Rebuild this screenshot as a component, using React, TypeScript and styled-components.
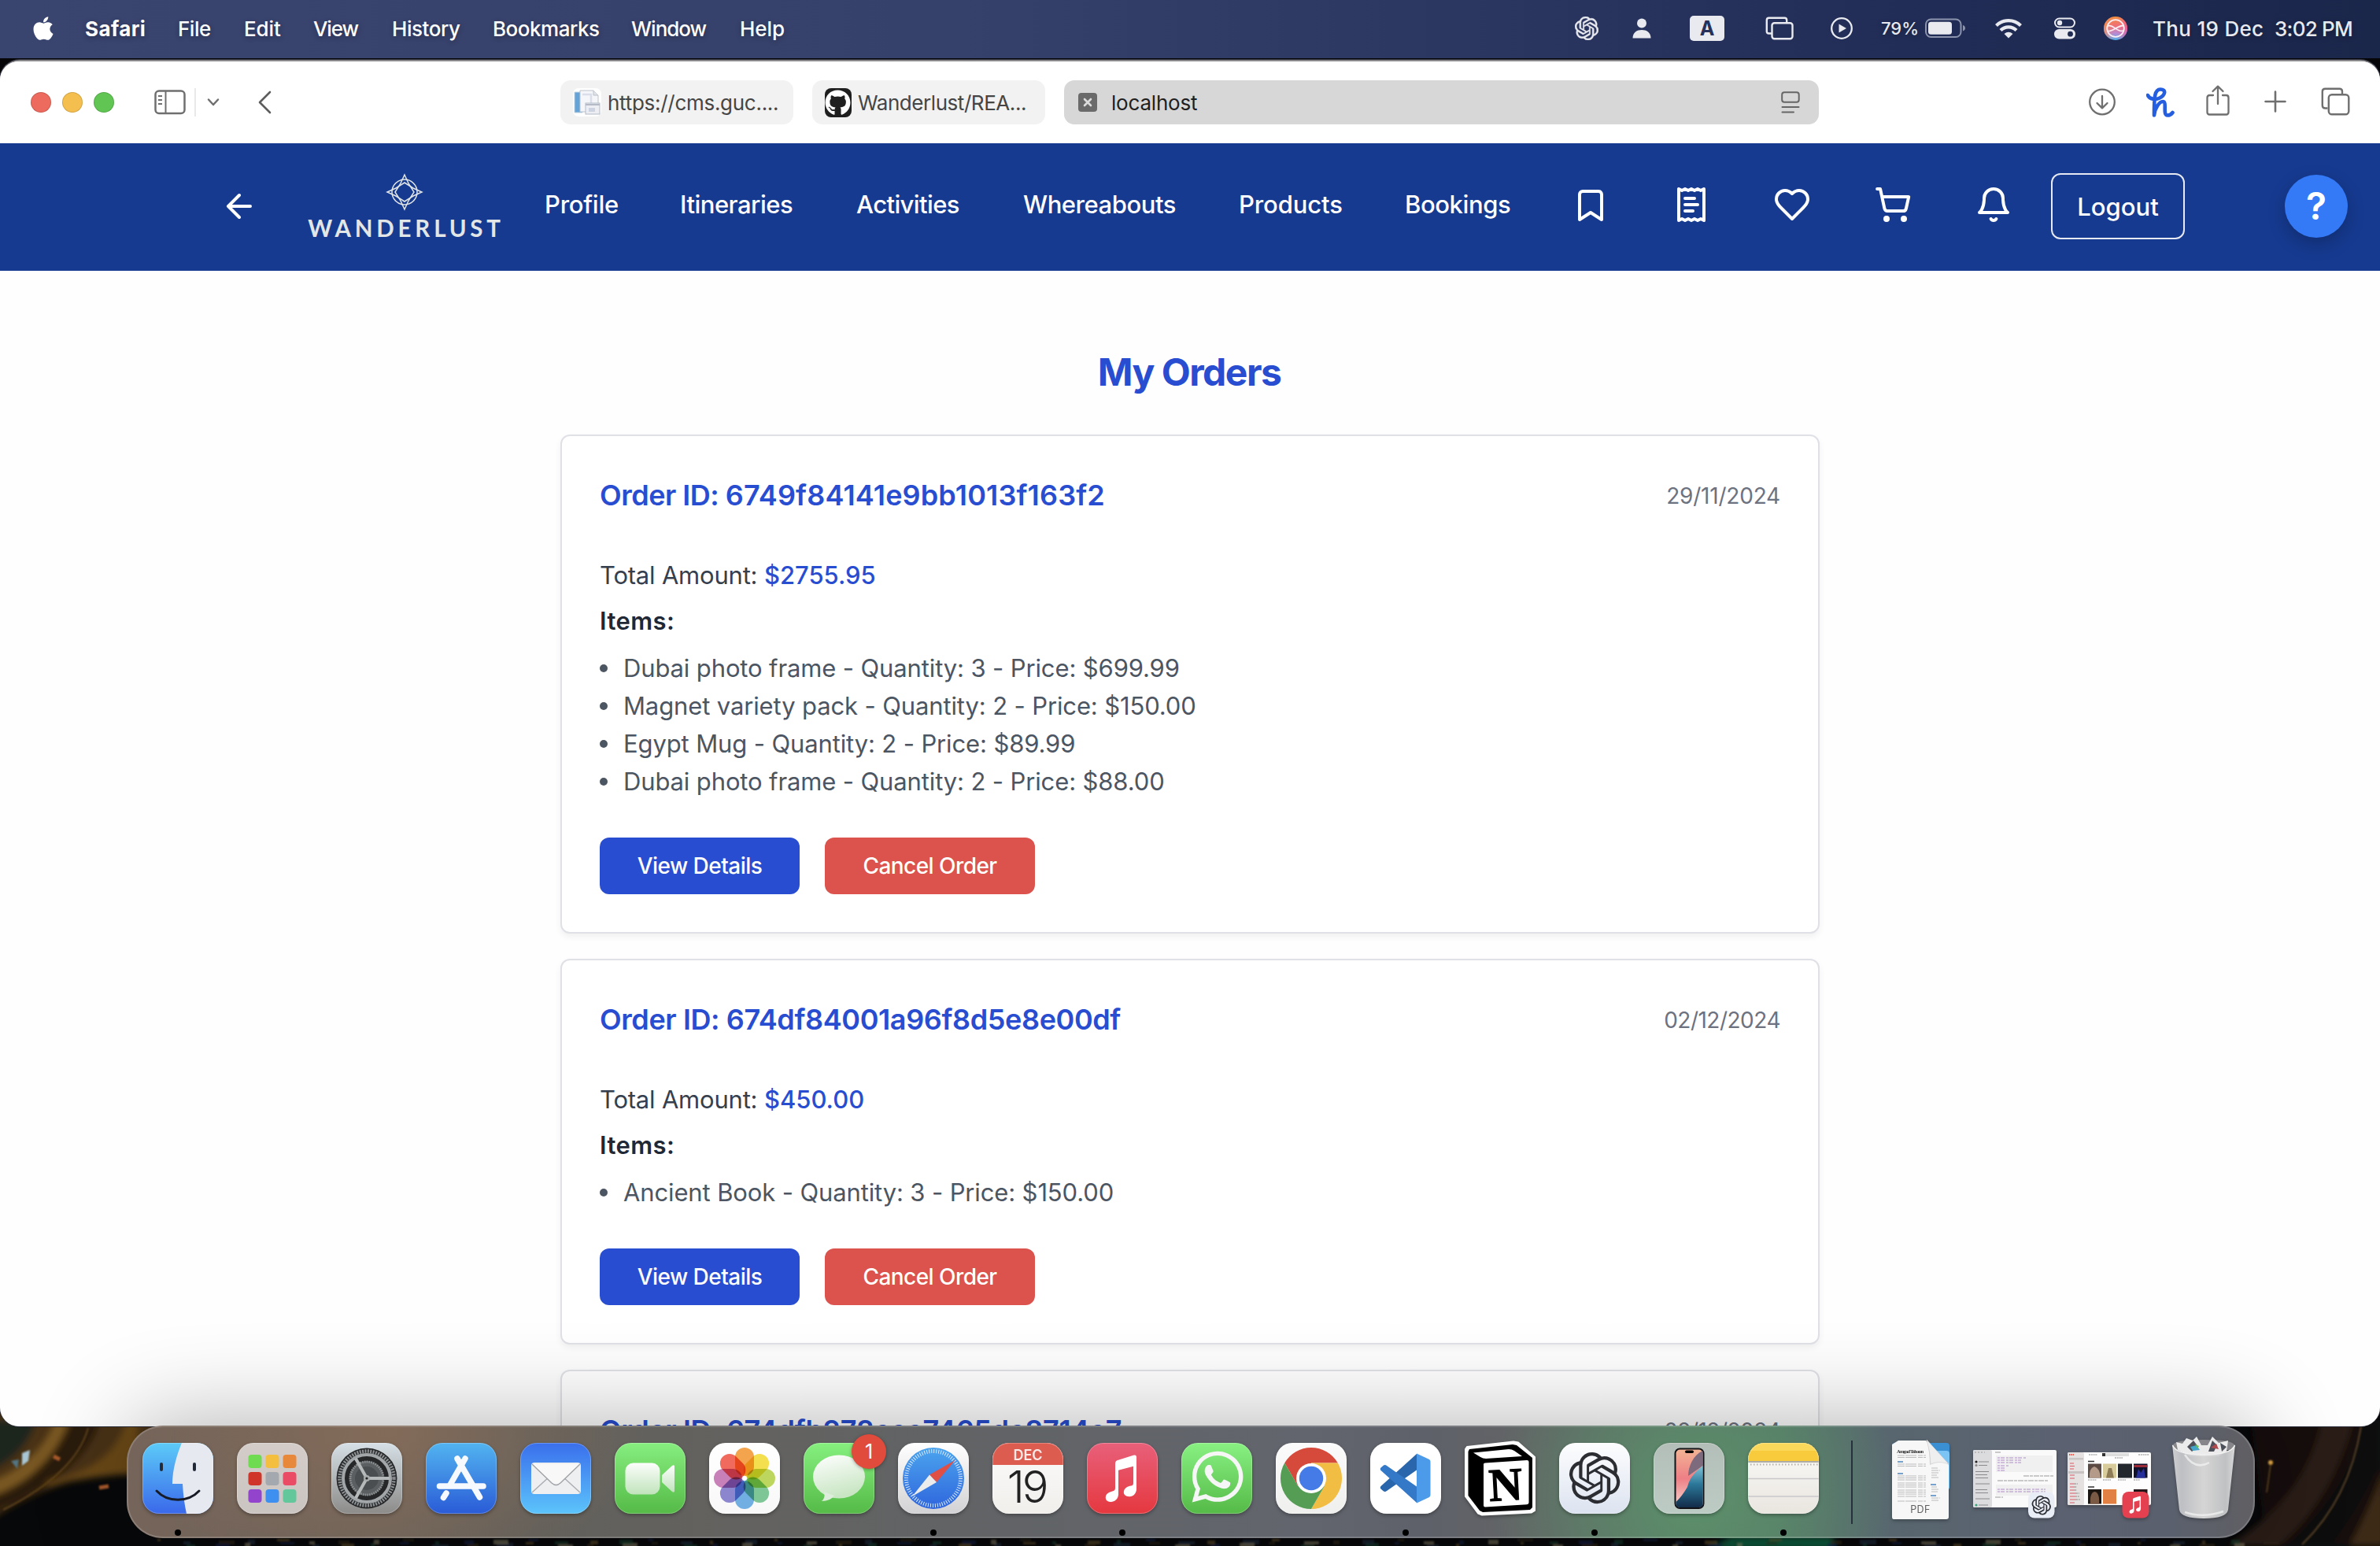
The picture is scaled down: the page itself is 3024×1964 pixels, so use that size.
import React from "react";
import styled, { createGlobalStyle } from "styled-components";
import { FaApple, FaGithub, FaWhatsapp } from "react-icons/fa";

const GlobalStyle = createGlobalStyle`
  * { box-sizing: border-box; }
  html, body { margin: 0; padding: 0; background: #000; }
  body { font-family: Inter, "Liberation Sans", sans-serif; overflow: hidden; }
  h1, h2, h3, p, ul { margin: 0; padding: 0; font-weight: inherit; }
  svg { display: block; flex: none; }
  button { font-family: inherit; border: 0; padding: 0; }
`;

/* ---------- shared ---------- */

const Label = styled.span<{ $track?: number }>`
  letter-spacing: ${(p) => p.$track ?? 0}px;
  white-space: nowrap;
`;

const OPENAI =
  "M22.2819 9.8211a5.9847 5.9847 0 0 0-.5157-4.9108 6.0462 6.0462 0 0 0-6.5098-2.9A6.0651 6.0651 0 0 0 4.9807 4.1818a5.9847 5.9847 0 0 0-3.9977 2.9 6.0462 6.0462 0 0 0 .7427 7.0966 5.98 5.98 0 0 0 .511 4.9107 6.051 6.051 0 0 0 6.5146 2.9001A5.9847 5.9847 0 0 0 13.2599 24a6.0557 6.0557 0 0 0 5.7718-4.2058 5.9894 5.9894 0 0 0 3.9977-2.9001 6.0557 6.0557 0 0 0-.7475-7.0729zm-9.022 12.6081a4.4755 4.4755 0 0 1-2.8764-1.0408l.1419-.0804 4.7783-2.7582a.7948.7948 0 0 0 .3927-.6813v-6.7369l2.02 1.1686a.071.071 0 0 1 .038.0615v5.5826a4.504 4.504 0 0 1-4.4945 4.4944zm-9.6607-4.1254a4.4708 4.4708 0 0 1-.5346-3.0137l.142.0852 4.783 2.7582a.7712.7712 0 0 0 .7806 0l5.8428-3.3685v2.3324a.0804.0804 0 0 1-.0332.0615L9.74 19.9502a4.4992 4.4992 0 0 1-6.1408-1.6464zM2.3408 7.8956a4.485 4.485 0 0 1 2.3655-1.9728V11.6a.7664.7664 0 0 0 .3879.6765l5.8144 3.3543-2.0201 1.1685a.0757.0757 0 0 1-.071 0l-4.8303-2.7865A4.504 4.504 0 0 1 2.3408 7.872zm16.5963 3.8558L13.1038 8.364 15.1192 7.2a.0757.0757 0 0 1 .071 0l4.8303 2.7913a4.4944 4.4944 0 0 1-.6765 8.1042v-5.6772a.79.79 0 0 0-.407-.667zm2.0107-3.0231l-.142-.0852-4.7735-2.7818a.7759.7759 0 0 0-.7854 0L9.409 9.2297V6.8974a.0662.0662 0 0 1 .0284-.0615l4.8303-2.7866a4.4992 4.4992 0 0 1 6.6802 4.66zM8.3065 12.863l-2.02-1.1638a.0804.0804 0 0 1-.038-.0567V6.0742a4.4992 4.4992 0 0 1 7.3757-3.4537l-.142.0805L8.704 5.459a.7948.7948 0 0 0-.3927.6813zm1.0976-2.3654l2.602-1.4998 2.6069 1.4998v2.9994l-2.5974 1.4997-2.6067-1.4997Z";

const NOTE =
  "M38 26 Q38 22.5 42 21.6 L61 15.6 Q65 14.6 65 18 V58 C65 64 61 68 56 68 C51 68 48 65 49 61 C50 57 54 55 58 54.4 Q61 54 61 51 V29.5 L42 34.5 V65 C42 71 37 75 32 74.8 C27 74.6 25 71 26 67.5 C27 63.5 31 62 35 61 Q38 60.4 38 57 Z";

/* ---------- desktop ---------- */

const Desktop = styled.div`
  position: relative;
  width: 3024px;
  height: 1964px;
  overflow: hidden;
  display: flex;
  flex-direction: column;
  background: #060608;
`;

const Wallpaper = styled.svg`
  position: absolute;
  left: 0;
  bottom: 0;
`;

const MenuBar = styled.header`
  position: relative;
  height: 74px;
  flex: none;
  display: flex;
  align-items: center;
  padding: 0 36px 2px 38px;
  background: linear-gradient(90deg, #39446f 0%, #36416b 40%, #2a3660 63%, #202c55 82%, #1b264b 100%);
  color: #fff;
  font-size: 26px;
  font-weight: 500;
  text-shadow: 0 2px 6px rgba(0, 0, 0, 0.3);
`;

const MenuTitles = styled.nav`
  display: grid;
  grid-template-columns: 70px 118px 84px 88px 100px 128px 176px 138px 60px;
  align-items: center;
  margin-right: auto;
`;

const MenuTitle = styled(Label)<{ $bold?: boolean }>`
  font-weight: ${(p) => (p.$bold ? 700 : 500)};
`;

const StatusItems = styled.div`
  display: flex;
  align-items: center;
  color: #e9eaef;
`;

const StatusItem = styled.span<{ $gap: number; $w: number; $size?: number }>`
  display: flex;
  align-items: center;
  width: ${(p) => p.$w}px;
  margin-left: ${(p) => p.$gap}px;
  font-size: ${(p) => p.$size ?? 26}px;
`;

const InputSource = styled.b`
  width: 44px;
  height: 32px;
  border-radius: 5px;
  background: #e9eaef;
  color: #26315b;
  font-size: 25px;
  font-weight: 700;
  line-height: 32px;
  text-align: center;
  text-shadow: none;
`;

/* ---------- browser window ---------- */

const Window = styled.section`
  position: relative;
  flex: none;
  height: 1734px;
  margin-top: 4px;
  border-radius: 24px;
  overflow: hidden;
  background: #fefefe;
  display: flex;
  flex-direction: column;
`;

const WindowEdge = styled.div`
  position: absolute;
  inset: 76px 0 152px;
  border-radius: 25px;
  background: #8a8a8c;
  box-shadow: 0 0 0 1px #2c2e3c;
`;

const Toolbar = styled.div`
  height: 104px;
  flex: none;
  display: grid;
  grid-template-columns: 712px 1599px 1fr;
  align-items: center;
  color: #6f6f6f;
  background: #fff;
`;

const ToolbarLeft = styled.div`
  display: flex;
  align-items: center;
  padding-left: 39px;
`;

const ToolIcon = styled.span<{ $ml?: number; $up?: number }>`
  display: block;
  margin-left: ${(p) => p.$ml ?? 0}px;
  margin-bottom: ${(p) => p.$up ?? 0}px;
`;

const Light = styled.i<{ $c: string }>`
  width: 26px;
  height: 26px;
  margin-right: 14px;
  border-radius: 50%;
  background: ${(p) => p.$c};
  border: 1px solid rgba(0, 0, 0, 0.14);
`;

const Divider = styled.i`
  width: 2px;
  height: 36px;
  margin: 0 14px 0 11px;
  background: #e9e9e9;
`;

const Tabs = styled.div`
  display: grid;
  grid-template-columns: 296px 296px 1fr;
  column-gap: 24px;
`;

const Tab = styled.div<{ $active?: boolean }>`
  height: 56px;
  border-radius: 13px;
  display: flex;
  align-items: center;
  gap: ${(p) => (p.$active ? 18 : 8)}px;
  padding: 0 24px 0 ${(p) => (p.$active ? 18 : 16)}px;
  font-size: 26px;
  background: ${(p) => (p.$active ? "#d7d7d7" : "#f2f2f2")};
  color: ${(p) => (p.$active ? "#1f1f1f" : "#454545")};
  > :nth-child(3) { margin-left: auto; }
`;

const GitHubTile = styled.span`
  width: 37px;
  height: 37px;
  border-radius: 8px;
  background: #1f1f1f;
  color: #fff;
  display: grid;
  place-items: center;
  font-size: 33px;
`;

const ToolbarRight = styled.div`
  display: flex;
  align-items: center;
  justify-content: flex-end;
  padding-right: 38px;
`;

/* ---------- site header ---------- */

const SiteNav = styled.nav`
  height: 162px;
  flex: none;
  display: flex;
  align-items: center;
  padding-left: 280px;
  padding-bottom: 2px;
  background: #163a90;
  color: #fff;
`;

const Logo = styled.div`
  width: 250px;
  margin: 4px 0 0 61px;
  display: flex;
  flex-direction: column;
  align-items: center;
  color: #e3e6e6;
`;

const LogoText = styled.span`
  margin-top: 4px;
  font-family: Lato, sans-serif;
  font-weight: 700;
  font-size: 29.5px;
  line-height: 36px;
  letter-spacing: 4.8px;
  padding-left: 4px;
`;

const Links = styled.div`
  display: grid;
  grid-template-columns: 172px 224px 212px 274px 211px 212px;
  margin: 0 0 4px 53px;
  font-size: 31px;
  font-weight: 500;
  line-height: 40px;
`;

const IconRow = styled.div`
  display: flex;
  gap: 80px;
  margin-bottom: 4px;
`;

const LogoutButton = styled.button`
  width: 170px;
  height: 84px;
  margin-left: 49px;
  border: 2px solid #e6e9f1;
  border-radius: 12px;
  background: transparent;
  color: #fff;
  font-size: 31px;
  font-weight: 500;
`;

const HelpButton = styled.button`
  width: 80px;
  height: 80px;
  margin-left: 127px;
  border-radius: 50%;
  background: #347af7;
  box-shadow: 0 8px 22px rgba(0, 0, 0, 0.22);
  color: #fff;
  font-size: 48px;
  font-weight: 600;
  line-height: 80px;
`;

/* ---------- orders ---------- */

const Main = styled.main`
  flex: 1;
  padding: 98px 712px 0;
`;

const Title = styled.h1`
  height: 64px;
  margin: 0 0 46px -2px;
  font-size: 48px;
  line-height: 61px;
  font-weight: 700;
  letter-spacing: -1.5px;
  text-align: center;
  color: #284dd0;
`;

const Orders = styled.div`
  display: flex;
  flex-direction: column;
  gap: 32px;
`;

const Card = styled.article`
  padding: 48px;
  border: 2px solid #dfe1e6;
  border-radius: 12px;
  background: #fff;
  box-shadow: 0 4px 8px rgba(0, 0, 0, 0.06);
`;

const CardHead = styled.div`
  display: flex;
  justify-content: space-between;
  height: 56px;
  margin-bottom: 49px;
`;

const OrderId = styled.h2`
  font-size: 36px;
  line-height: 54px;
  font-weight: 600;
  color: #284dd0;
`;

const OrderDate = styled.span<{ $track: number }>`
  font-size: 28px;
  line-height: 56px;
  letter-spacing: ${(p) => p.$track}px;
  color: #6d7280;
`;

const Total = styled.p`
  font-size: 31px;
  line-height: 48px;
  letter-spacing: -0.2px;
  color: #363f4d;
  b { font-weight: 500; color: #284dd0; letter-spacing: 0; }
`;

const ItemsTitle = styled.p`
  margin-top: 10px;
  font-size: 31px;
  line-height: 48px;
  font-weight: 600;
  letter-spacing: 0.4px;
  color: #1f2836;
`;

const ItemList = styled.ul`
  margin-top: 12px;
  list-style: none;
  font-size: 31px;
  line-height: 48px;
  letter-spacing: -0.13px;
  color: #4c5562;
`;

const Item = styled.li`
  display: flex;
  align-items: center;
  &::before {
    content: "";
    width: 10px;
    height: 10px;
    margin-right: 20px;
    border-radius: 50%;
    background: #4c5562;
  }
`;

const Actions = styled.div`
  display: flex;
  gap: 32px;
  margin-top: 47px;
`;

const ActionButton = styled.button<{ $danger?: boolean }>`
  width: ${(p) => (p.$danger ? 267 : 254)}px;
  height: 72px;
  border-radius: 12px;
  background: ${(p) => (p.$danger ? "#dc524c" : "#284dd0")};
  color: #fff;
  font-size: 28px;
  font-weight: 500;
  letter-spacing: -0.55px;
`;

/* ---------- dock ---------- */

const Dock = styled.div`
  position: absolute;
  left: 161px;
  top: 1811px;
  width: 2704px;
  height: 143px;
  padding: 0 3px;
  border: 2px solid rgba(255, 255, 255, 0.17);
  border-radius: 46px;
  display: flex;
  background:
    radial-gradient(ellipse 330px 190px at 330px 10px, rgba(140, 110, 88, 0.7), transparent),
    radial-gradient(ellipse 260px 260px at 1990px 90px, rgba(92, 150, 106, 0.85), rgba(92, 150, 106, 0.35) 60%, transparent),
    linear-gradient(90deg, #75645a 0, #6d635a 330px, #62605b 520px, #636260 800px, #616365 1050px, #62656d 1500px, #5e6169 1650px, #626366 1760px, #567568 2100px, #58666f 2240px, #5b6170 2450px, #5a606d 2600px, #605f63 100%);
  background-clip: border-box;
  background-origin: border-box;
  box-shadow: 0 -4px 120px rgba(0, 0, 0, 0.3);
`;

const DockCell = styled.div<{ $top?: number }>`
  position: relative;
  width: 120px;
  flex: none;
  display: flex;
  flex-direction: column;
  align-items: center;
  padding-top: ${(p) => p.$top ?? 20}px;
  > svg { overflow: visible; filter: drop-shadow(0 2px 2px rgba(0, 0, 0, 0.3)); }
`;

const RunningDot = styled.i`
  width: 8px;
  height: 8px;
  margin-top: 20px;
  border-radius: 50%;
  background: #000;
`;

const Badge = styled.span`
  position: absolute;
  left: 76px;
  top: 9px;
  width: 44px;
  height: 44px;
  border-radius: 50%;
  background: #e04b3c;
  box-shadow: 0 1px 4px rgba(0, 0, 0, 0.35);
  color: #fff;
  font-size: 25px;
  line-height: 44px;
  text-align: center;
`;

const DockLine = styled.i`
  width: 2px;
  height: 106px;
  margin: 17px 26px 0;
  background: #27313e;
`;

const Petals = styled.g`
  isolation: isolate;
  rect { mix-blend-mode: multiply; }
`;

/* ---------- icon drawings ---------- */

type Stop = [string, string];
const Grad = ({ id, stops, x2 = 0, y2 = 1 }: { id: string; stops: Stop[]; x2?: number; y2?: number }) => (
  <linearGradient id={id} x1="0" y1="0" x2={x2} y2={y2}>
    {stops.map(([o, c]) => <stop key={o} offset={o} stopColor={c} />)}
  </linearGradient>
);

const Tile = ({ id, from, to, children }: { id: string; from: string; to: string; children?: React.ReactNode }) => (
  <svg width="90" height="90" viewBox="0 0 90 90">
    <defs>
      <Grad id={id} stops={[["0", from], ["1", to]]} />
      <clipPath id={id + "c"}><rect width="90" height="90" rx="21" /></clipPath>
    </defs>
    <rect width="90" height="90" rx="21" fill={`url(#${id})`} />
    <g clipPath={`url(#${id}c)`}>{children}</g>
    <rect x=".5" y=".5" width="89" height="89" rx="20.5" fill="none" stroke="#fff" strokeOpacity=".25" />
  </svg>
);

const Line = ({ children, size = 48, sw = 2 }: { children: React.ReactNode; size?: number; sw?: number }) => (
  <svg width={size} height={size} viewBox="0 0 24 24" fill="none" stroke="currentColor" strokeWidth={sw} strokeLinecap="round" strokeLinejoin="round">
    {children}
  </svg>
);

const Finder = () => (
  <Tile id="fi" from="#5ccbf8" to="#3a68ea">
    <path d="M50 0C44 14 38 34 38 52H51Q52 72 56 90H90V0Z" fill="#e6e9f0" />
    <path d="M24 27v7M66 27v7" stroke="#222a38" strokeWidth="4" strokeLinecap="round" />
    <path d="M18 61C32 76 58 76 72 61" fill="none" stroke="#161b26" strokeWidth="3" strokeLinecap="round" />
  </Tile>
);

const padColors = ["#6edb50", "#f4bf3f", "#e8883a", "#cf3529", "#a3a9ae", "#ea4c66", "#9245cc", "#3d8ff0", "#62c79a"];
const Launchpad = () => (
  <Tile id="lp" from="#d3ccc8" to="#cbc5c2">
    {padColors.map((c, i) => (
      <rect key={c} x={14.5 + (i % 3) * 22} y={15 + Math.floor(i / 3) * 22} width="17" height="17" rx="4" fill={c} />
    ))}
  </Tile>
);

const Settings = () => (
  <Tile id="se" from="#d6e0e6" to="#8c8b89">
    <circle cx="45" cy="45" r="38.5" fill="#252729" />
    <circle cx="45" cy="45" r="34.5" fill="none" stroke="#8e9193" strokeWidth="4.5" strokeDasharray="2 1.4" />
    <circle cx="45" cy="45" r="30" fill="none" stroke="#a3a6a8" strokeWidth="4" />
    <circle cx="45" cy="45" r="22" fill="#5c5f61" />
    <circle cx="45" cy="45" r="21" fill="none" stroke="#8d9092" strokeWidth="3" strokeDasharray="1.6 1.2" />
    <circle cx="45" cy="45" r="15" fill="#4b4e50" />
    <path d="M45 45H74M45 45L31 20M45 45L31 70" stroke="#b6b9ba" strokeWidth="4" />
    <circle cx="45" cy="45" r="4" fill="#a9acad" />
    <circle cx="45" cy="45" r="1.6" fill="#222" />
  </Tile>
);

const AppStore = () => (
  <Tile id="as" from="#52b4f0" to="#2a5bd7">
    <g stroke="#f6f9fe" strokeWidth="7.5" strokeLinecap="round">
      <path d="M17.5 55H73" />
      <path d="M50 20L31 53M40 20L68.5 69M26 64L22.5 69.5" />
    </g>
  </Tile>
);

const Mail = () => (
  <Tile id="ma" from="#3a6fec" to="#5cc4fb">
    <rect x="14" y="25" width="63" height="40" rx="4" fill="#eeeff0" />
    <path d="M15 63L38 42M76 63L53 42" stroke="#a9acb0" strokeWidth="1.4" />
    <path d="M15 27L40 51Q45.5 56 51 51L76 27" fill="#f8f8f8" stroke="#9fa2a6" strokeWidth="1.4" />
  </Tile>
);

const FaceTime = () => (
  <Tile id="ft" from="#86ee7f" to="#55ba47">
    <defs><Grad id="ftg" stops={[["0", "#fcfefc"], ["1", "#c0e3bb"]]} /></defs>
    <rect x="13.5" y="25.5" width="44" height="40" rx="10" fill="url(#ftg)" />
    <path d="M60 41L73 29Q76 27 76 30V61Q76 64 73 62L60 50Z" fill="url(#ftg)" />
  </Tile>
);

const petals = ["#f29a38", "#f3dc3c", "#b6d34c", "#70c08a", "#62a6e0", "#8079c9", "#c172b0", "#ee5a4c"];
const Photos = () => (
  <Tile id="ph" from="#ffffff" to="#f8f8f8">
    <Petals>
      {petals.map((c, i) => (
        <rect key={c} x="33" y="6" width="24" height="36" rx="12" fill={c} fillOpacity=".9" transform={`rotate(${i * 45} 45 45)`} />
      ))}
    </Petals>
    <circle cx="45" cy="45" r="2" fill="#fff" />
  </Tile>
);

const Messages = () => (
  <Tile id="ms" from="#86f07f" to="#55ba47">
    <defs><Grad id="msg" stops={[["0", "#ffffff"], ["1", "#c9e6c4"]]} x2={0.3} /></defs>
    <ellipse cx="45" cy="43" rx="33" ry="27.5" fill="url(#msg)" />
    <path d="M26 62Q28 70 23 74Q34 74 39 67Z" fill="#dceedb" />
  </Tile>
);

const Safari = () => (
  <Tile id="sa" from="#ffffff" to="#d2d2d4">
    <defs><Grad id="sag" stops={[["0", "#4ba4ee"], ["1", "#2f66dd"]]} /></defs>
    <circle cx="45" cy="45" r="39" fill="url(#sag)" />
    <circle cx="45" cy="45" r="34.5" fill="none" stroke="#dcebfb" strokeWidth="5" strokeDasharray="1 2.01" />
    <path d="M72.5 22L40 40.5L49 50Z" fill="#df4f45" />
    <path d="M18 68L40 40.5L49 50Z" fill="#ececec" />
  </Tile>
);

const Calendar = () => (
  <Tile id="ca" from="#fbfbfa" to="#f1efec">
    <rect width="90" height="28" fill="#dd5c50" />
    <text x="45" y="21.5" fontFamily="Inter" fontWeight="600" fontSize="18" textAnchor="middle" fill="#fde9e6">DEC</text>
    <text x="43.5" y="76" fontFamily="Inter" fontWeight="300" fontSize="56" letterSpacing="-3" textAnchor="middle" fill="#222">19</text>
  </Tile>
);

const Music = () => (
  <Tile id="mu" from="#e8607a" to="#e5383f"><path d={NOTE} fill="#fff" transform="translate(-2 .2)" /></Tile>
);

const WhatsApp = () => (
  <Tile id="wa" from="#88f182" to="#55ba47">
    <FaWhatsapp x={9} y={6} size={74} color="#f6f6f6" />
  </Tile>
);

const Chrome = () => (
  <Tile id="ch" from="#fbfbfb" to="#efefee">
    <path d="M11.2 25.5A39 39 0 0 1 78.8 25.5H45L28.1 54.75Z" fill="#d64a3c" />
    <path d="M78.8 25.5A39 39 0 0 1 45 84L61.9 54.75L45 25.5Z" fill="#f1bd42" />
    <path d="M45 84A39 39 0 0 1 11.2 25.5L28.1 54.75H61.9Z" fill="#559d55" />
    <circle cx="45" cy="45" r="19" fill="#fff" />
    <circle cx="45" cy="45" r="15.2" fill="#447be6" />
  </Tile>
);

const VSCode = () => (
  <Tile id="vs" from="#ffffff" to="#ffffff">
    <g strokeLinejoin="round">
      <path d="M59 14L13.5 55Q12 57 13.5 58.5L17 61.5Q19 62.5 21 61L59 34.5Z" fill="#2a66ac" />
      <path d="M59 76L13.5 35Q12 33 13.5 31.5L17 28.5Q19 27.5 21 29L59 55.5Z" fill="#3479c8" />
      <path d="M59 13.5L75 21Q76.5 22 76.5 24V66Q76.5 68 75 69L59 76.5Z" fill="#4c9aea" />
    </g>
  </Tile>
);

const Notion = () => (
  <svg width="90" height="90" viewBox="0 0 90 90">
    <path d="M3 5L62 -1.5L68 -.5L89 18V86L85 88.5L22 91.5L17 89.5L1 68V8Z" fill="#fff" stroke="#fff" strokeWidth="2" strokeLinejoin="round" />
    <path d="M6 8L61 2L66 3L86 19V82L83 85L23 88L19 86L4.5 67V11Z" fill="#000" />
    <path d="M11 12.5L56 8Q60 8 63 10L73 17L27 20Q23 20 20 18Z" fill="#fff" />
    <path d="M24 27Q24 25.5 26 25.5L79 22Q81.5 22 81.5 24V76Q81.5 78 79 78.2L26 81.5Q24 81.5 24 79.5Z" fill="#fff" />
    <text x="52" y="73" fontFamily="Liberation Serif" fontWeight="700" fontSize="59" textAnchor="middle" fill="#000" stroke="#000" strokeWidth="1.2" transform="rotate(-3 52 52)">N</text>
  </svg>
);

const ChatGPT = () => (
  <Tile id="cg" from="#fdfdfe" to="#dce3f0">
    <path d={OPENAI} fill="#2b2d33" transform="translate(12.5 12) scale(2.72)" />
  </Tile>
);

const Mirroring = () => (
  <Tile id="im" from="#b3beb8" to="#bdcbc5">
    <defs>
      <Grad id="img" stops={[["0", "#f2b394"], ["0.5", "#ee7f86"], ["1", "#f6d7cf"]]} />
      <Grad id="imb" stops={[["0", "#7fc5da"], ["0.45", "#2b7698"], ["1", "#122c49"]]} />
    </defs>
    <rect x="26.5" y="6.5" width="38" height="77.5" rx="7" fill="#121316" />
    <rect x="28.5" y="8.5" width="34" height="73.5" rx="5" fill="url(#img)" />
    <path d="M62.5 10C50 16 44 30 44 42L62.5 29Z" fill="#7d6b7d" />
    <path d="M62.5 29C52 38 46 44 43 56Q36 68 28.5 75V77Q28.5 82 33.5 82H57.5Q62.5 82 62.5 77Z" fill="url(#imb)" />
    <rect x="40" y="9.5" width="11" height="3.5" rx="1.7" fill="#000" />
  </Tile>
);

const Notes = () => (
  <Tile id="no" from="#fbfbf9" to="#e9e5df">
    <rect width="90" height="23" fill="#f8cb3c" />
    <rect width="90" height="10" fill="#fad85a" />
    <path d="M0 24H90" stroke="#96918a" strokeWidth="1.5" />
    <path d="M3 27.5H90" stroke="#b5b0a8" strokeWidth="2" strokeDasharray="1.5 2.5" />
    <path d="M0 45.5H90M0 68H90" stroke="#c9c7ca" strokeWidth="1.5" />
  </Tile>
);

const PdfFile = () => (
  <svg width="74" height="102" viewBox="0 0 74 102">
    <rect x="1" y="4" width="73" height="58" rx="4" fill="#3b8fd3" />
    <rect x="3" y="14" width="71" height="50" rx="4" fill="#7cc4f3" />
    <path d="M1 6L9 1H44L73 32V98Q73 101 70 101H3Q1 101 1 98Z" fill="#f7f7f7" />
    <path d="M45 0L73 31Q60 26 49 32Q49 16 45 0Z" fill="#d6d6d6" />
    <path d="M45 0L73 31Q60 26 50 31Q50 16 45 0Z" fill="#efefef" stroke="#ccc" strokeWidth=".5" />
    <text x="7" y="17" fontFamily="Liberation Serif" fontWeight="700" fontSize="6.5" fill="#333" textLength="34">Amgad Tahoun</text>
    <g stroke="#b4b4b4" strokeWidth=".9" strokeDasharray="9 1 14 2 6 1">
      {[20, 22.5, 31, 33.5, 46, 48.5, 51, 55, 57.5, 60, 64, 66.5, 69, 72, 78].map((y) => <path key={y} d={`M8 ${y}H44`} />)}
      {[36, 39, 42, 45, 48, 60, 63, 66, 74, 77].map((y) => <path key={y} d={`M51 ${y}H${58 + (y % 5)}`} />)}
    </g>
    <path d="M8 28H15M8 43H15M50 57H57M50 71H57" stroke="#4b86c2" strokeWidth="1.3" />
    <text x="37" y="92.5" fontFamily="Inter" fontSize="12.5" textAnchor="middle" fill="#5f5f5f" letterSpacing=".4">PDF</text>
  </svg>
);

const ChatWindow = () => (
  <svg width="106" height="87" viewBox="0 0 106 87">
    <rect width="106" height="73" rx="2" fill="#fafafa" />
    <rect width="24" height="73" rx="2" fill="#dcdcdf" />
    <path d="M2 3H15" stroke="#bbb" strokeWidth="2" strokeDasharray="2 2" />
    <circle cx="4" cy="15" r="1.6" fill="#222" /><circle cx="4" cy="19.5" r="1.6" fill="#888" /><circle cx="4" cy="70" r="1.6" fill="#36a878" />
    <path d="M7 15H20M7 19.5H18M3 27.5H20M3 31.5H18M3 35.5H19M3 43H21M3 50.5H18M3 54.5H19M3 62H21M7 70H19" stroke="#8a8a8e" strokeWidth="1.2" />
    <path d="M28 3H35M31 39H96M64 33H102M28 60H38" stroke="#999" strokeWidth="1" strokeDasharray="7 1 4 1" />
    <rect x="29" y="7" width="72" height="21" fill="#f0f0f1" /><rect x="29" y="44" width="72" height="14" fill="#f0f0f1" />
    <path d="M31 10H68M31 13H61M31 16H61M31 20H45M31 23H41M31 26H41M31 50H92M31 53H92" stroke="#c3aed2" strokeWidth="1.3" strokeDasharray="3 1 5 2" />
    <rect x="70" y="53.5" width="33.5" height="33" rx="8" fill="#e9edf5" />
    <path d={OPENAI} fill="#2b2d33" transform="translate(74.5 58) scale(1.02)" />
  </svg>
);

const MusicWindow = () => (
  <svg width="106" height="84" viewBox="0 0 106 84">
    <rect width="106" height="67" rx="2" fill="#fdfdfd" />
    <rect width="21" height="67" rx="2" fill="#e4e1e0" />
    <path d="M2 3H8" stroke="#e2574c" strokeWidth="1.8" strokeDasharray="1.5 1" />
    <rect x="2" y="7" width="18" height="2.5" fill="#c9c6c5" /><rect x="1" y="24" width="20" height="3" fill="#c8c3c2" />
    <path d="M3 14H8M3 17.5H9M3 21H8M3 29H9M3 33H9M3 40H9M3 44H9M3 48H9M3 52H11M3 56H10M3 60H11M3 64H9" stroke="#d85d68" strokeWidth="1.1" />
    <path d="M9 40H13M9 44H12M9 48H12M11 52H15M10 56H15M11 60H16M27 3H38M60 7H70M90 3H104M26 35H37M45 35H55M64 35H74M84 35H92" stroke="#888" strokeWidth="1" strokeDasharray="2 .8" />
    <rect x="44" y="1" width="34" height="4" fill="#dedede" /><rect x="44" y="1" width="4" height="4" fill="#333" />
    <path d="M26 11.5H34M26 44H34" stroke="#333" strokeWidth="1.5" />
    <rect x="26" y="14.500" width="17" height="18" fill="#5b4a43" /><path d="M28 32.500Q27 20 34 18Q41 20 42 32.500Z" fill="#b49a88" />
    <rect x="45" y="14.500" width="17" height="18" fill="#d9cc9c" /><path d="M49 32.500L52 20H56L59 32.500Z" fill="#8d7c55" />
    <rect x="64" y="14.500" width="18" height="18" fill="#22262d" /><rect x="84" y="14.500" width="17.500" height="18" fill="#10122c" />
    <path d="M87 32.500L90 21L93 26L97 20L99 32.500Z" fill="#26309a" /><path d="M84 16H101.500V19H84Z" fill="#9c2c38" />
    <rect x="26" y="47" width="17" height="18.500" fill="#1c1613" /><path d="M29 65.500Q28 51 34.500 50Q41 51 40 65.500Z" fill="#7a5a45" />
    <rect x="45" y="47" width="17" height="18.500" fill="#e18144" /><rect x="84" y="47" width="17.500" height="18.500" fill="#241719" />
    <rect x="69.500" y="50" width="34" height="33.500" rx="8" fill="#e5404f" />
    <path d={NOTE} fill="#fff" transform="translate(69 50) scale(.37)" />
  </svg>
);

const Trash = () => (
  <svg width="82" height="106" viewBox="0 0 82 106">
    <defs><Grad id="tr" x2={1} y2={0} stops={[["0", "#d8d8d9"], ["0.15", "#c6c7ca"], ["0.5", "#dedede"], ["0.85", "#c8c9cb"], ["1", "#e2e2e3"]]} /></defs>
    <path d="M2 12Q3 5 41 5Q79 5 80 12L80 18H2Z" fill="#87878b" />
    <path d="M8 18L6 8L14 10L19 3L27 6L32 1L38 12L46 12L52 1L60 9L72 6L70 20L60 26L24 26Z" fill="#ebebeb" />
    <path d="M20 14L28 6L34 14L26 20ZM47 20L52 6L58 12L54 20ZM62 9L70 14L64 20Z" fill="#4d5059" />
    <path d="M24 14L32 12L36 18L27 19Z" fill="#42a5c9" /><path d="M50 15L57 10L60 17Z" fill="#b04a4c" /><path d="M30 11L35 13L33 16Z" fill="#68bb4e" />
    <path d="M1 11Q6 24 41 24Q76 24 81 11L72 94Q70 105 41 105Q12 105 10 94Z" fill="url(#tr)" fillOpacity=".94" />
    <path d="M17 24Q30 44 48 34M17 97Q40 105 66 96" fill="none" stroke="#f5f5f5" strokeWidth="2.5" strokeOpacity=".7" />
    <path d="M1.5 12Q6 24 41 24Q76 24 80.5 12" fill="none" stroke="#f2f2f2" strokeWidth="1.5" />
  </svg>
);

/* ---------- data ---------- */

const menus: [string, number][] = [
  ["File", -0.47], ["Edit", -0.1], ["View", -1.1], ["History", -0.45], ["Bookmarks", -0.48], ["Window", -1], ["Help", -0.1],
];

const links: [string, number][] = [
  ["Profile", -0.25], ["Itineraries", -0.5], ["Activities", -0.6], ["Whereabouts", -0.45], ["Products", -0.1], ["Bookings", -0.4],
];

const orders = [
  {
    id: "6749f84141e9bb1013f163f2", track: 0.15, date: "29/11/2024", dateTrack: -0.2, total: "$2755.95",
    items: [
      "Dubai photo frame - Quantity: 3 - Price: $699.99",
      "Magnet variety pack - Quantity: 2 - Price: $150.00",
      "Egypt Mug - Quantity: 2 - Price: $89.99",
      "Dubai photo frame - Quantity: 2 - Price: $88.00",
    ],
  },
  { id: "674df84001a96f8d5e8e00df", track: -0.38, date: "02/12/2024", dateTrack: -0.5, total: "$450.00", items: ["Ancient Book - Quantity: 3 - Price: $150.00"] },
  { id: "674dfb278ccc7465dc8714c7", track: -0.3, date: "02/12/2024", dateTrack: -0.5, total: "$150.00", items: ["Ancient Book - Quantity: 1 - Price: $150.00"] },
];

const dockApps: { name: string; icon: React.ReactNode; running?: boolean; badge?: number }[] = [
  { name: "finder", icon: <Finder />, running: true },
  { name: "launchpad", icon: <Launchpad /> },
  { name: "settings", icon: <Settings /> },
  { name: "appstore", icon: <AppStore /> },
  { name: "mail", icon: <Mail /> },
  { name: "facetime", icon: <FaceTime /> },
  { name: "photos", icon: <Photos /> },
  { name: "messages", icon: <Messages />, badge: 1 },
  { name: "safari", icon: <Safari />, running: true },
  { name: "calendar", icon: <Calendar /> },
  { name: "music", icon: <Music />, running: true },
  { name: "whatsapp", icon: <WhatsApp /> },
  { name: "chrome", icon: <Chrome /> },
  { name: "vscode", icon: <VSCode />, running: true },
  { name: "notion", icon: <Notion /> },
  { name: "chatgpt", icon: <ChatGPT />, running: true },
  { name: "mirroring", icon: <Mirroring /> },
  { name: "notes", icon: <Notes />, running: true },
];

/* ---------- app ---------- */

const StatusBar = () => (
  <StatusItems>
    <StatusItem $gap={0} $w={30}><svg width="30" height="30" viewBox="0 0 24 24"><path d={OPENAI} fill="currentColor" stroke="currentColor" strokeWidth=".4" /></svg></StatusItem>
    <StatusItem $gap={43} $w={25}>
      <svg width="24" height="26" viewBox="0 0 24 26" fill="currentColor"><circle cx="12" cy="6.500" r="6" /><path d="M.5 25.500C.5 18 6 15 12 15s11.500 3 11.500 10.500z" /></svg>
    </StatusItem>
    <StatusItem $gap={48} $w={44}><InputSource>A</InputSource></StatusItem>
    <StatusItem $gap={52} $w={36}>
      <svg width="36" height="30" viewBox="0 0 36 30" fill="none" stroke="currentColor" strokeWidth="2.400"><path d="M8 21.500H4.500Q1.800 21.500 1.800 19V4.500Q1.800 1.800 4.500 1.800H24.500Q27.200 1.800 27.200 4.500V8" /><rect x="8.500" y="8.300" width="26" height="20" rx="3" /></svg>
    </StatusItem>
    <StatusItem $gap={47} $w={28}>
      <svg width="28" height="28" viewBox="0 0 28 28"><circle cx="14" cy="14" r="12.800" fill="none" stroke="currentColor" strokeWidth="2.300" /><path d="M10.500 8.500L20 14L10.500 19.500Z" fill="currentColor" /></svg>
    </StatusItem>
    <StatusItem $gap={36} $w={47} $size={22}><Label>79%</Label></StatusItem>
    <StatusItem $gap={9} $w={52}>
      <svg width="52" height="26" viewBox="0 0 52 26"><rect x="1" y="1.500" width="44.500" height="22.500" rx="6.500" fill="none" stroke="#8c93ad" strokeWidth="2" /><rect x="4" y="4.700" width="30" height="16" rx="3.500" fill="currentColor" /><path d="M48 9Q51 10 51 12.800Q51 15.500 48 16.500Z" fill="#8c93ad" /></svg>
    </StatusItem>
    <StatusItem $gap={37} $w={34}>
      <svg width="34" height="26" viewBox="0 0 34 26" fill="none" stroke="currentColor" strokeWidth="4.200"><path d="M1.500 9.500A22 22 0 0 1 32.500 9.500M7 15.500A14 14 0 0 1 27 15.500" /><path d="M11.500 20Q17 15.500 22.500 20L17 25.500Z" fill="currentColor" stroke="none" /></svg>
    </StatusItem>
    <StatusItem $gap={41} $w={27}>
      <svg width="27" height="28" viewBox="0 0 27 28"><rect x="1" y="1.500" width="25" height="11" rx="5.500" fill="none" stroke="currentColor" strokeWidth="2" /><circle cx="7" cy="7" r="3.200" fill="currentColor" /><rect y="15" width="27" height="12.500" rx="6.200" fill="currentColor" /><circle cx="20.500" cy="21.200" r="3.400" fill="#1f2b52" /></svg>
    </StatusItem>
    <StatusItem $gap={36} $w={30}>
      <svg width="30" height="30" viewBox="0 0 30 30">
        <defs>
          <Grad id="siri" stops={[["0", "#f3923c"], ["0.4", "#ee6f78"], ["0.7", "#b98ad6"], ["1", "#46b4f0"]]} />
          <Grad id="siriEdge" y2={0} x2={1} stops={[["0", "#f3a63c"], ["0.5", "#ee6f7800"], ["1", "#ef4c9a"]]} />
        </defs>
        <circle cx="15" cy="15" r="15" fill="url(#siri)" /><circle cx="15" cy="15" r="15" fill="url(#siriEdge)" fillOpacity=".6" />
        <g fill="none" stroke="#fbeef4" strokeWidth="1.800"><circle cx="15" cy="15" r="10.800" /><path d="M5 12C12 9 17 21 25 18M5 18.500C11 20 18 11 25 11.500" /></g>
      </svg>
    </StatusItem>
    <StatusItem $gap={32} $w={140}><Label $track={0.3}>Thu 19 Dec</Label></StatusItem>
    <StatusItem $gap={15} $w={98}><Label $track={-0.77}>3:02 PM</Label></StatusItem>
  </StatusItems>
);

const dotColors = ["#6e5527", "#20304a", "#3a2c18", "#8f866a", "#1b1f4f", "#12452f"];

export default function App() {
  return (
    <Desktop>
      <GlobalStyle />
      <Wallpaper width="3024" height="180" viewBox="0 0 3024 180">
        <defs>
          <filter id="soft" x="-20%" y="-20%" width="140%" height="140%"><feGaussianBlur stdDeviation="4" /></filter>
          <filter id="tight"><feGaussianBlur stdDeviation="1.200" /></filter>
        </defs>
        <rect width="3024" height="180" fill="#07080a" />
        <g filter="url(#soft)">
          <path d="M-10 10H270L165 82Q70 92 -10 145Z" fill="#4a3212" />
          <path d="M-10 118Q60 90 92 20H128Q110 88 -10 138Z" fill="#2b1d0b" />
          <path d="M-10 98Q45 78 70 24H86Q60 92 -10 116Z" fill="#7a5824" />
          <path d="M60 98Q140 84 160 24H175V88Q120 90 60 104Z" fill="#6b4817" />
          <path d="M-10 20H46Q36 60 -10 84Z" fill="#1d271d" />
          <path d="M2860 20H3024V180H2880Z" fill="#15110f" />
          <path d="M2830 180Q2930 120 2950 20H2990Q2965 120 2895 180Z" fill="#2a1d12" />
          <path d="M2905 180Q2985 110 3002 26H3024V70Q3000 130 2960 180Z" fill="#0b0a0c" />
          <path d="M2985 180Q3008 140 3030 80V180Z" fill="#3d2912" />
          <path d="M2200 168H2330V184H2170Z" fill="#0f5a3c" />
        </g>
        <g filter="url(#tight)">
          <path d="M28 62L38 58L36 72L28 78Z" fill="#a9c6d4" /><path d="M14 72L24 70L22 82Z" fill="#527482" />
          <path d="M68 66L76 70M126 106L138 104" stroke="#a85a2a" strokeWidth="5" />
          <path d="M112 30Q96 88 4 134" stroke="#5f431b" strokeWidth="2" fill="none" />
          <circle cx="2885" cy="74" r="3" fill="#e2a945" /><path d="M2885 76L2880 112" stroke="#6a5024" strokeWidth="1.500" />
          <path d="M2925 178Q2985 120 3000 28" stroke="#554028" strokeWidth="2" fill="none" />
          {Array.from({ length: 130 }, (_, i) => (
            <rect key={i} x={200 + ((i * 197) % 2680)} y={171 + ((i * 7) % 8)} width={4 + ((i * 5) % 18)} height={3 + (i % 4)} opacity=".5" fill={dotColors[i % 6]} />
          ))}
        </g>
      </Wallpaper>

      <MenuBar>
        <MenuTitles>
          <FaApple size={34} />
          <MenuTitle $bold $track={0.4}>Safari</MenuTitle>
          {menus.map(([t, k]) => <MenuTitle key={t} $track={k}>{t}</MenuTitle>)}
        </MenuTitles>
        <StatusBar />
      </MenuBar>

      <WindowEdge />
      <Window>
        <Toolbar>
          <ToolbarLeft>
            <Light $c="#ec6a5e" /><Light $c="#f5bf4f" /><Light $c="#61c554" />
            <ToolIcon $ml={37}>
              <svg width="40" height="32" viewBox="0 0 40 32" fill="none" stroke="currentColor" strokeWidth="2.500">
                <rect x="1.500" y="1.500" width="37" height="28.500" rx="4.500" /><path d="M14.500 2V30M5 8H10M5 13H10M5 18H10" strokeWidth="2" />
              </svg>
            </ToolIcon>
            <Divider />
            <svg width="16" height="12" viewBox="0 0 16 12" fill="none" stroke="currentColor" strokeWidth="2.500" strokeLinecap="round" strokeLinejoin="round"><path d="M2 2.500L8 9L14 2.500" /></svg>
            <ToolIcon $ml={48} $up={1}>
              <svg width="18" height="30" viewBox="0 0 18 30" fill="none" stroke="#5d5d5d" strokeWidth="2.600" strokeLinecap="round" strokeLinejoin="round"><path d="M16 2L3 15L16 28" /></svg>
            </ToolIcon>
          </ToolbarLeft>
          <Tabs>
            <Tab>
              <svg width="36" height="36" viewBox="0 0 36 36">
                <rect width="36" height="36" rx="7" fill="#fff" />
                <path d="M2 5H12V31H2Z" fill="#63a3d8" stroke="#c5d3de" />
                <path d="M9 3H26L32 9V30H9Z" fill="#f5f6f9" stroke="#bcc2cb" /><path d="M26 3V9H32" fill="#dfe3ea" stroke="#bcc2cb" />
                <path d="M12 8H23V30" stroke="#d9deea" strokeWidth="2.500" fill="none" />
                <rect x="16" y="19" width="18" height="14" fill="#eceef4" stroke="#b4bac6" /><path d="M16 21H34" stroke="#b4bac6" strokeWidth="2" /><rect x="20" y="25" width="8" height="5" fill="#cdd3e0" />
              </svg>
              <Label $track={-0.28}>https://cms.guc....</Label>
            </Tab>
            <Tab>
              <GitHubTile><FaGithub /></GitHubTile>
              <Label $track={-0.44}>Wanderlust/REA...</Label>
            </Tab>
            <Tab $active>
              <svg width="24" height="24" viewBox="0 0 24 24"><rect width="24" height="24" rx="4" fill="#6a6a6a" /><path d="M8 8L16 16M16 8L8 16" stroke="#dcdcdc" strokeWidth="2.600" strokeLinecap="round" /></svg>
              <Label $track={-0.2}>localhost</Label>
              <svg width="24" height="28" viewBox="0 0 24 28" fill="none" stroke="#666" strokeWidth="2" strokeLinecap="round"><rect x="1.200" y="1.200" width="21.500" height="12.500" rx="3" /><path d="M1.500 20H22.500M1.500 26.500H16" /></svg>
            </Tab>
          </Tabs>
          <ToolbarRight>
            <svg width="36" height="36" viewBox="0 0 36 36" fill="none" stroke="currentColor" strokeWidth="2.300" strokeLinecap="round" strokeLinejoin="round"><circle cx="18" cy="17.500" r="15.800" /><path d="M18 10V25M11.500 19L18 25.300L24.500 19" /></svg>
            <ToolIcon $ml={38}>
              <svg width="36" height="38" viewBox="0 0 36 38" fill="none" stroke="#265ee0" strokeWidth="4.600" strokeLinecap="round" strokeLinejoin="round">
                <path d="M2 10C4 15.500 12 16 17 13.500C24 10 26 2.500 18 2.500C10.500 2.500 10 12 10 35.500C11 26 17 17.500 21.500 18C26.500 18.500 20.500 35.500 27 35.500C30 35.500 32 34 33.500 32" />
              </svg>
            </ToolIcon>
            <ToolIcon $ml={40} $up={4}>
              <svg width="30" height="40" viewBox="0 0 30 40" fill="none" stroke="currentColor" strokeWidth="2.300" strokeLinecap="round" strokeLinejoin="round"><path d="M9 13H4.500Q1.500 13 1.500 16V34.500Q1.500 37.500 4.500 37.500H25.500Q28.500 37.500 28.500 34.500V16Q28.500 13 25.500 13H21M15 24V2M8.500 8L15 1.700L21.500 8" /></svg>
            </ToolIcon>
            <ToolIcon $ml={44} $up={3}>
              <svg width="28" height="28" viewBox="0 0 28 28" fill="none" stroke="currentColor" strokeWidth="2.600" strokeLinecap="round"><path d="M14 1.500V26.500M1.500 14H26.500" /></svg>
            </ToolIcon>
            <ToolIcon $ml={44} $up={2}>
              <svg width="37" height="36" viewBox="0 0 37 36" fill="none" stroke="currentColor" strokeWidth="2.400" strokeLinejoin="round"><path d="M8.500 26.500H5.500Q1.800 26.500 1.800 23V5.200Q1.800 1.800 5.500 1.800H23.500Q27 1.800 27 5.200V8" /><rect x="9.800" y="9.200" width="25.500" height="25" rx="4" /></svg>
            </ToolIcon>
          </ToolbarRight>
        </Toolbar>

        <SiteNav>
          <Line><path d="m12 19-7-7 7-7M19 12H5" /></Line>
          <Logo>
            <svg width="48" height="48" viewBox="-24 -24 48 48" fill="none" stroke="currentColor" strokeWidth="1.500" strokeLinejoin="miter">
              <circle r="16" />
              <path d="M0 -22L5 -11L12 0L5 11L0 22L-5 11L-12 0L-5 -11Z" />
              <path d="M-22 0L-11 -5L0 -12L11 -5L22 0L11 5L0 12L-11 5Z" />
            </svg>
            <LogoText>WANDERLUST</LogoText>
          </Logo>
          <Links>{links.map(([t, k]) => <Label key={t} $track={k}>{t}</Label>)}</Links>
          <IconRow>
            <Line><path d="m19 21.500-7-4.500-7 4.500V5.500a2 2 0 0 1 2-2h10a2 2 0 0 1 2 2v16z" /></Line>
            <Line><path d="M4 2v20l2-1 2 1 2-1 2 1 2-1 2 1 2-1 2 1V2l-2 1-2-1-2 1-2-1-2 1-2-1-2 1Z" /><path d="M14 8H8M16 12H8M13 16H8" /></Line>
            <Line><path d="M19 14c1.490-1.460 3-3.210 3-5.500A5.500 5.500 0 0 0 16.500 3c-1.760 0-3 .5-4.500 2-1.500-1.500-2.740-2-4.500-2A5.500 5.500 0 0 0 2 8.500c0 2.300 1.500 4.050 3 5.500l7 7Z" /></Line>
            <Line><circle cx="8" cy="21" r="1" /><circle cx="19" cy="21" r="1" /><path d="M2.050 2.050h2l2.660 12.420a2 2 0 0 0 2 1.580h9.780a2 2 0 0 0 1.950-1.570l1.650-7.430H5.120" /></Line>
            <Line><path d="M6 8a6 6 0 0 1 12 0c0 7 3 9 3 9H3s3-2 3-9" /><path d="M10.300 21a1.940 1.940 0 0 0 3.400 0" /></Line>
          </IconRow>
          <LogoutButton>Logout</LogoutButton>
          <HelpButton>?</HelpButton>
        </SiteNav>

        <Main>
          <Title>My Orders</Title>
          <Orders>
            {orders.map((o, i) => (
              <Card key={o.id}>
                <CardHead>
                  <OrderId>
                    <Label $track={i === 0 ? -0.5 : -0.4}>Order ID: </Label>
                    <Label $track={o.track}>{o.id}</Label>
                  </OrderId>
                  <OrderDate $track={o.dateTrack}>{o.date}</OrderDate>
                </CardHead>
                <Total>Total Amount: <b>{o.total}</b></Total>
                <ItemsTitle>Items:</ItemsTitle>
                <ItemList>{o.items.map((t) => <Item key={t}>{t}</Item>)}</ItemList>
                <Actions>
                  <ActionButton>View Details</ActionButton>
                  <ActionButton $danger>Cancel Order</ActionButton>
                </Actions>
              </Card>
            ))}
          </Orders>
        </Main>
      </Window>

      <Dock>
        {dockApps.map((a) => (
          <DockCell key={a.name}>
            {a.icon}
            {a.running && <RunningDot />}
            {a.badge && <Badge>{a.badge}</Badge>}
          </DockCell>
        ))}
        <DockLine />
        <DockCell $top={16}><PdfFile /></DockCell>
        <DockCell $top={29}><ChatWindow /></DockCell>
        <DockCell $top={32}><MusicWindow /></DockCell>
        <DockCell $top={11}><Trash /></DockCell>
      </Dock>
    </Desktop>
  );
}
